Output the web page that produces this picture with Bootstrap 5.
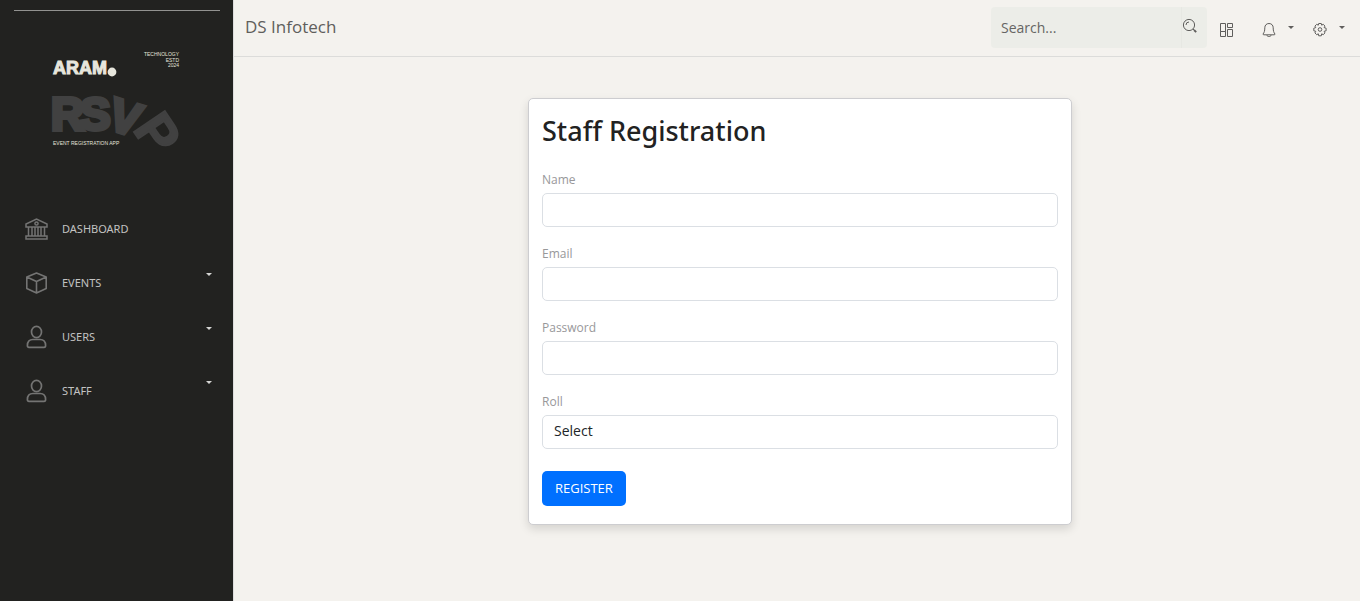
<!DOCTYPE html>
<html lang="en">
<head>
<meta charset="utf-8">
<meta name="viewport" content="width=device-width, initial-scale=1">
<title>Staff Registration</title>
<link href="https://cdn.jsdelivr.net/npm/bootstrap@5.3.0/dist/css/bootstrap.min.css" rel="stylesheet">
<style>
body { font-family: "Open Sans", "Noto Sans", sans-serif; font-size: 14px; background: #f4f2ee; color: #212529; }
.sidebar { width: 234px; background: #222220; border-right: 1px solid #ddd; padding: 10px 13px 0 14px; }
.sidebar-rule { border-top: 1px solid #929290; }
.brand-art { display: block; width: 132px; height: 100px; margin: 38px 0 53px 36px; overflow: visible; }
.menu-link { height: 54px; padding: 0 8px 0 10px; font-family: "Noto Sans", sans-serif; font-size: 11px; color: #c3c3c2; text-decoration: none; }
.menu-link svg { width: 25px; height: 24px; margin-right: 13px; color: #747473; }
.tri { border: 3px solid transparent; border-top-color: currentColor; border-bottom: 0; }
.menu-link .tri { margin-bottom: 17px; color: #d6d6d4; }
.topbar { height: 57px; border-bottom: 1px solid #dcdcda; padding: 0 15px 2px 11px; color: #5f5e5c; }
.site-name { font-size: 17px; color: #5f5e5c; text-decoration: none; }
.search { width: 216px; height: 41px; background: #ecede8; border-radius: 4px; margin-right: 12px; }
.search .form-control { font-size: 14px; padding: 0 10px; background: transparent; border: 0; border-right: 1px solid #e7e8e3; border-radius: 0; }
.search .form-control::placeholder { color: #666563; opacity: 1; }
.tool { display: flex; align-items: center; background: none; border: 0; padding: 5px 0 0; color: #5f5e5c; }
.tool .tri { margin: 0 0 4px 11px; }
.search .tool { width: 25px; padding: 0 0 2px; }
.tools-gap { margin-right: 26px; }
.tools-gap-sm { margin-right: 18px; }
.page { padding: 41px 16px 41px 22px; }
.form-card { max-width: 544px; padding: 13px 13px 18px; border: 1px solid #cdcdd0; border-radius: 5px; box-shadow: 0 4px 10px rgba(0,0,0,.13); }
.form-card h1 { font-family: "Noto Sans", sans-serif; font-size: 27px; font-weight: 500; line-height: 36px; margin: 1px 0 22px; color: #222; }
.form-label { font-size: 12px; line-height: 18px; margin-bottom: 4px; color: #98989a; }
.field { margin-bottom: 18px; }
.field .form-control { height: 34px; padding: 0 11px 3px; font-size: 14px; border-color: #dbdfe4; border-radius: 5px; color: #212529; }
.btn-register { height: 35px; padding: 0 12px; font-size: 13px; color: #fff; background: #0070ff; border-radius: 5px; }
</style>
</head>
<body>
<div class="d-flex min-vh-100">
  <aside class="sidebar flex-shrink-0">
    <div class="sidebar-rule"></div>
    <svg class="brand-art" viewBox="50 49 132 100" role="img" aria-label="Aram RSVP">
      <g font-family="Liberation Sans, sans-serif" font-weight="700">
        <text x="53" y="74" font-size="18" fill="#e7e6dc" stroke="#e7e6dc">ARAM</text>
        <g fill="#414141" stroke="#414141" stroke-width="4">
          <text x="51" y="130" font-size="46">R</text>
          <text x="80" y="130" font-size="46">S</text>
          <text transform="translate(106 128) rotate(17)" font-size="46">V</text>
          <text transform="translate(132 129) rotate(56)" font-size="54" stroke-width="2">P</text>
        </g>
      </g>
      <circle cx="112" cy="72" r="4.4" fill="#e7e6dc"/>
      <g font-family="Liberation Sans, sans-serif" font-size="5" fill="#e4e4dc">
        <text x="179" y="56" text-anchor="end">TECHNOLOGY</text>
        <text x="179" y="62" text-anchor="end">ESTD</text>
        <text x="179" y="67" text-anchor="end">2024</text>
        <text x="53" y="145">EVENT REGISTRATION APP</text>
      </g>
    </svg>
    <nav>
      <a class="menu-link d-flex align-items-center" href="#">
        <svg viewBox="0 0 25 24" fill="none" stroke="currentColor" stroke-width="1.5"><path d="M2 10V7l10.500-5L23 7v3zM4.500 10v9M8 10v9M11 10v9M14 10v9M17 10v9M20.500 10v9M2 19h21v3H2z"/><circle cx="12.500" cy="6.500" r="1.600"/></svg>
        DASHBOARD</a>
      <a class="menu-link d-flex align-items-center" href="#">
        <svg viewBox="0 0 25 24" fill="none" stroke="currentColor" stroke-width="1.600" stroke-linejoin="round"><path d="M12.500 2l9.700 4v11.500l-9.700 4.500-9.700-4.500V6zM2.800 6l9.700 4.500L22.200 6M12.500 10.500V22"/></svg>
        <span class="me-auto">EVENTS</span><span class="tri"></span></a>
      <a class="menu-link d-flex align-items-center" href="#">
        <svg viewBox="0 0 25 24" fill="none" stroke="currentColor" stroke-width="1.700"><ellipse cx="12.500" cy="7" rx="5" ry="5.600"/><path d="M9 14.500h7c3.500 0 5.600 2.500 5.600 6 0 1.400-.6 1.800-1.600 1.800H5c-1 0-1.600-.4-1.600-1.800 0-3.500 2.100-6 5.600-6z"/></svg>
        <span class="me-auto">USERS</span><span class="tri"></span></a>
      <a class="menu-link d-flex align-items-center" href="#">
        <svg viewBox="0 0 25 24" fill="none" stroke="currentColor" stroke-width="1.700"><ellipse cx="12.500" cy="7" rx="5" ry="5.600"/><path d="M9 14.500h7c3.500 0 5.600 2.500 5.600 6 0 1.400-.6 1.800-1.600 1.800H5c-1 0-1.600-.4-1.600-1.800 0-3.500 2.100-6 5.600-6z"/></svg>
        <span class="me-auto">STAFF</span><span class="tri"></span></a>
    </nav>
  </aside>
  <div class="flex-grow-1">
    <header class="topbar d-flex align-items-center">
      <a class="site-name me-auto" href="#">DS Infotech</a>
      <form class="search d-flex">
        <input class="form-control" type="search" placeholder="Search..." aria-label="Search">
        <button class="tool flex-shrink-0" type="button" aria-label="Search">
          <svg width="16" height="16" viewBox="0 0 16 16" fill="none" stroke="currentColor"><circle cx="7" cy="7" r="5.600"/><path d="M4 7a3 3 0 0 1 3-3M11 11l1.300 1.300"/><path d="M12 12l2.200 2.200" stroke-width="1.800"/></svg>
        </button>
      </form>
      <button class="tool tools-gap" type="button" aria-label="Apps">
        <svg width="16" height="16" viewBox="0 0 16 16" fill="none" stroke="currentColor"><path d="M1.500 1.500h5v8h-5zM8.500 1.500h5v4h-5zM1.500 9.500h5v5h-5zM8.500 7.500h5v7h-5z"/></svg>
      </button>
      <button class="tool tools-gap-sm" type="button" aria-label="Notifications">
        <svg width="16" height="16" viewBox="0 0 16 16" fill="none" stroke="currentColor" stroke-linejoin="round"><path d="M8 1.500c2.600 0 4.200 1.800 4.200 4.300 0 3.200.6 4.800 1.800 6.200 0 .6-.3.800-.9.800H2.900c-.6 0-.9-.2-.9-.8 1.200-1.400 1.800-3 1.800-6.200 0-2.500 1.600-4.300 4.200-4.300zM5.800 13c.4 2 4 2 4.400 0"/></svg>
        <span class="tri"></span>
      </button>
      <button class="tool" type="button" aria-label="Settings">
        <svg width="16" height="16" viewBox="0 0 16 16" fill="none" stroke="currentColor" stroke-linejoin="round"><path d="M6.700 1.500h2.600l.4 1.700 1.500-.9 1.800 1.800-.9 1.500 2 .6v2.600l-2 .5.900 1.600-1.800 1.800-1.500-.9-.4 2H6.700l-.4-2-1.600.9-1.800-1.800.9-1.600-2-.5V6.200l2-.6-.9-1.500 1.800-1.800 1.600.9z"/><circle cx="8" cy="7.500" r="1.800"/></svg>
        <span class="tri"></span>
      </button>
    </header>
    <main class="page">
      <form class="form-card bg-white mx-auto">
        <h1>Staff Registration</h1>
        <div class="field"><label class="form-label d-block" for="name">Name</label><input class="form-control" id="name" type="text"></div>
        <div class="field"><label class="form-label d-block" for="email">Email</label><input class="form-control" id="email" type="email"></div>
        <div class="field"><label class="form-label d-block" for="password">Password</label><input class="form-control" id="password" type="password"></div>
        <div class="field"><label class="form-label d-block" for="roll">Roll</label><select class="form-control" id="roll"><option>Select</option></select></div>
        <button class="btn btn-register mt-1" type="button">REGISTER</button>
      </form>
    </main>
  </div>
</div>
<script src="https://cdn.jsdelivr.net/npm/bootstrap@5.3.0/dist/js/bootstrap.bundle.min.js"></script>
</body>
</html>
